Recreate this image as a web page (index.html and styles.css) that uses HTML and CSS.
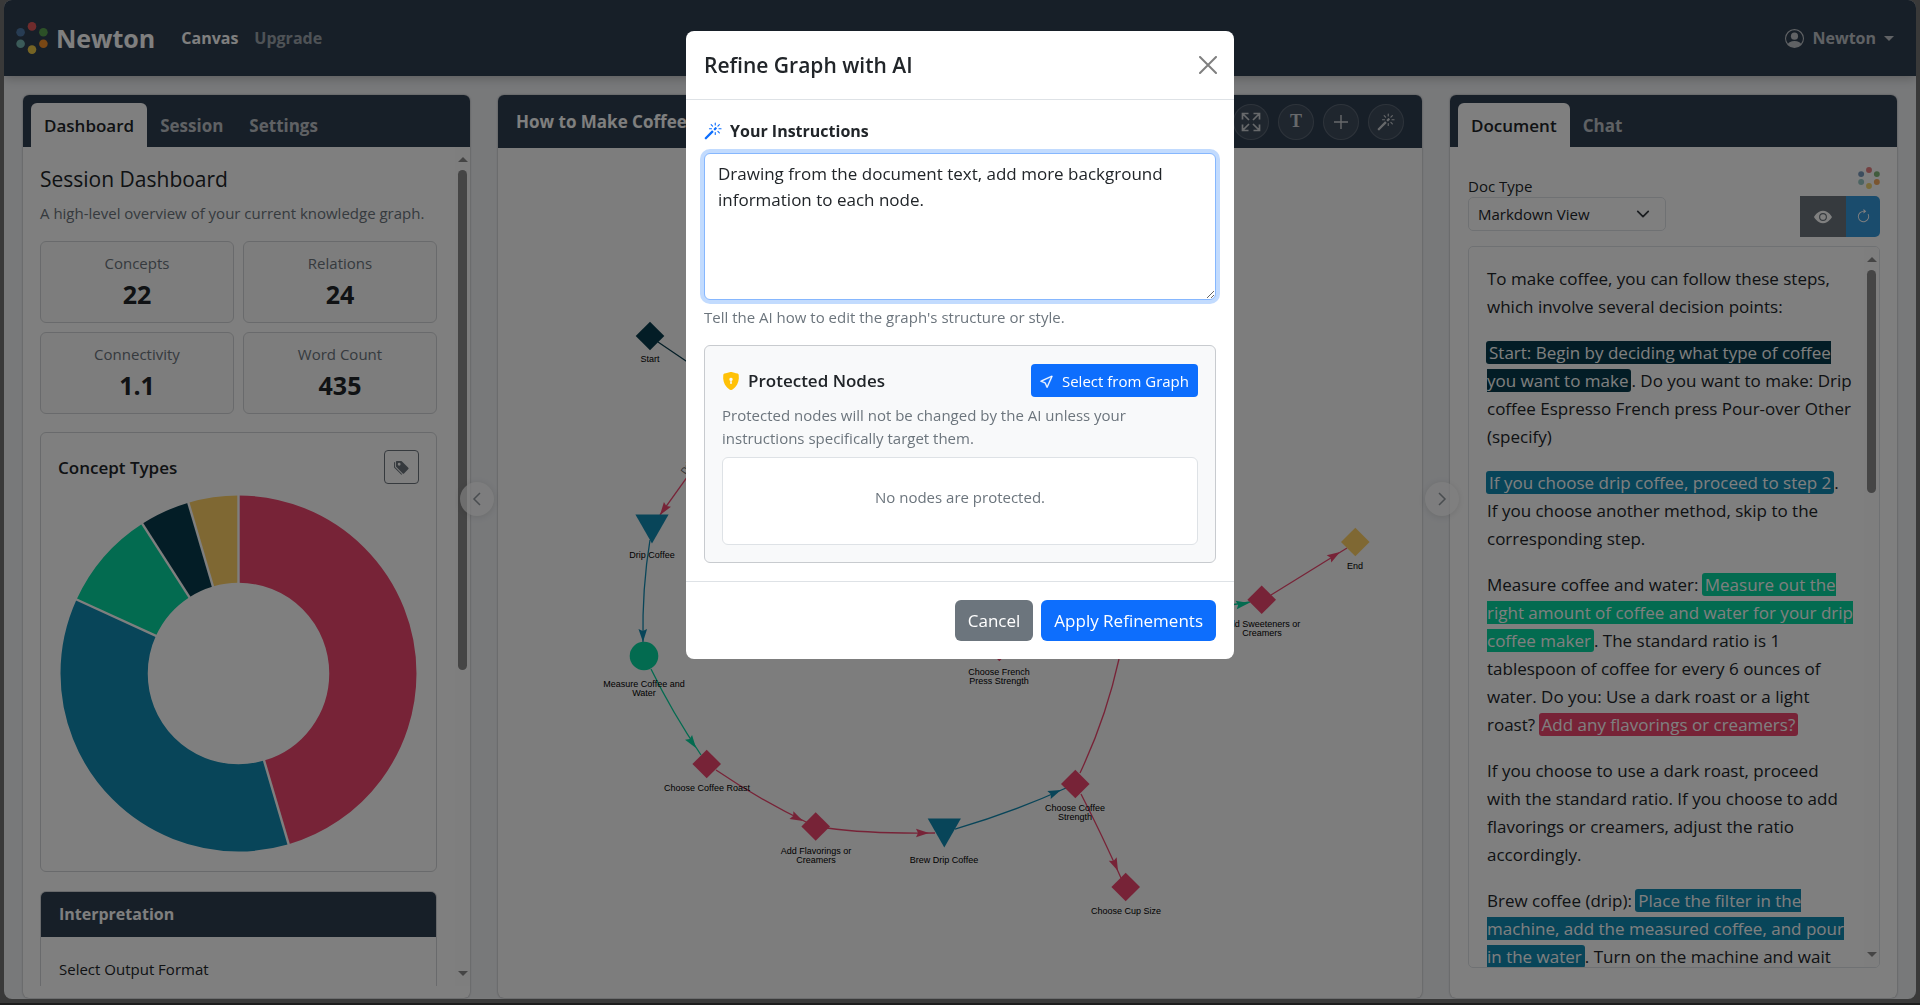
FILE: index.html
```html
<!DOCTYPE html>
<html lang="en">
<head>
  <meta charset="UTF-8">
  <title>Newton</title>
  <link rel="stylesheet" href="styles.css">
</head>
<body>
  <!-- shared icons -->
  <svg class="sprite" aria-hidden="true">
    <symbol id="icon-logo" viewBox="0 0 32 32">
      <circle cx="16" cy="4.4" r="4.3" fill="#e15759"/>
      <circle cx="27.4" cy="10.3" r="4.3" fill="#59a14f"/>
      <circle cx="27.4" cy="21.7" r="4.3" fill="#f28e2b"/>
      <circle cx="16" cy="27.6" r="4.3" fill="#edc948"/>
      <circle cx="4.6" cy="21.7" r="4.3" fill="#76b7b2"/>
      <circle cx="4.6" cy="10.3" r="4.3" fill="#4e79a7"/>
    </symbol>
    <symbol id="icon-magic" viewBox="0 0 16 16">
      <path d="M9.5 2.672a.5.5 0 1 0 1 0V.843a.5.5 0 0 0-1 0v1.829Zm4.5.035A.5.5 0 0 0 13.293 2L12 3.293a.5.5 0 1 0 .707.707L14 2.707ZM7.293 4A.5.5 0 1 0 8 3.293L6.707 2A.5.5 0 0 0 6 2.707L7.293 4Zm-.621 2.5a.5.5 0 1 0 0-1H4.843a.5.5 0 1 0 0 1h1.829Zm8.485 0a.5.5 0 1 0 0-1h-1.829a.5.5 0 0 0 0 1h1.829ZM13.293 10A.5.5 0 1 0 14 9.293L12.707 8a.5.5 0 1 0-.707.707L13.293 10ZM9.5 11.157a.5.5 0 0 0 1 0V9.328a.5.5 0 0 0-1 0v1.829Zm1.854-5.097a.5.5 0 0 0 0-.706l-.708-.708a.5.5 0 0 0-.707 0L8.646 5.94a.5.5 0 0 0 0 .707l.708.708a.5.5 0 0 0 .707 0l1.293-1.293Zm-3 3a.5.5 0 0 0 0-.706l-.708-.708a.5.5 0 0 0-.707 0L.646 13.94a.5.5 0 0 0 0 .707l.707.707a.5.5 0 0 0 .707 0L8.354 9.06Z"/>
    </symbol>
  </svg>

  <div class="app">
    <nav class="navbar">
      <a class="brand" href="#">
        <svg width="32" height="32"><use href="#icon-logo"/></svg>
        <span>Newton</span>
      </a>
      <a class="nav-link active" href="#">Canvas</a>
      <a class="nav-link" href="#">Upgrade</a>
      <button class="user-menu" type="button">
        <svg width="19" height="19" viewBox="0 0 16 16" fill="currentColor">
          <path d="M11 6a3 3 0 1 1-6 0 3 3 0 0 1 6 0z"/>
          <path fill-rule="evenodd" d="M0 8a8 8 0 1 1 16 0A8 8 0 0 1 0 8zm8-7a7 7 0 0 0-5.468 11.37C3.242 11.226 4.805 10 8 10s4.757 1.225 5.468 2.37A7 7 0 0 0 8 1z"/>
        </svg>
        <span>Newton</span>
        <span class="caret"></span>
      </button>
    </nav>

    <main class="workspace">
      <section class="panel side">
        <div class="panel-tabs">
          <button class="tab active" type="button">Dashboard</button>
          <button class="tab" type="button">Session</button>
          <button class="tab" type="button">Settings</button>
        </div>
        <div class="dash-scroll">
          <div class="dash-content">
            <h2 class="dash-title">Session Dashboard</h2>
            <p class="dash-desc">A high-level overview of your current knowledge graph.</p>

            <div class="stats">
              <div class="stat"><span>Concepts</span><strong>22</strong></div>
              <div class="stat"><span>Relations</span><strong>24</strong></div>
              <div class="stat"><span>Connectivity</span><strong>1.1</strong></div>
              <div class="stat"><span>Word Count</span><strong>435</strong></div>
            </div>

            <div class="chart-card">
              <div class="chart-head">
                <h3>Concept Types</h3>
                <button class="tag-btn" type="button" aria-label="Labels">
                  <svg width="15" height="15" viewBox="0 0 16 16" fill="currentColor">
                    <path d="M2 2a1 1 0 0 1 1-1h4.586a1 1 0 0 1 .707.293l7 7a1 1 0 0 1 0 1.414l-4.586 4.586a1 1 0 0 1-1.414 0l-7-7A1 1 0 0 1 2 6.586V2zm3.5 4a1.5 1.5 0 1 0 0-3 1.5 1.5 0 0 0 0 3z"/>
                    <path d="M1.293 7.793A1 1 0 0 1 1 7.086V2a1 1 0 0 0-1 1v4.586a1 1 0 0 0 .293.707l7 7a1 1 0 0 0 1.414 0l.043-.043-7.457-7.457z"/>
                  </svg>
                </button>
              </div>
              <svg class="donut" viewBox="-180 -180 360 360">
                <!-- one dash unit per concept, 22 in total -->
                <g fill="none" stroke-width="87" transform="rotate(-90)">
                  <circle r="134" pathLength="22" stroke="#ef476f" stroke-dasharray="10 12"/>
                  <circle r="134" pathLength="22" stroke="#118ab2" stroke-dasharray="8 14" stroke-dashoffset="-10"/>
                  <circle r="134" pathLength="22" stroke="#06d6a0" stroke-dasharray="2 20" stroke-dashoffset="-18"/>
                  <circle r="134" pathLength="22" stroke="#073b4c" stroke-dasharray="1 21" stroke-dashoffset="-20"/>
                  <circle r="134" pathLength="22" stroke="#ffd166" stroke-dasharray="1 21" stroke-dashoffset="-21"/>
                </g>
                <g stroke="#fff" stroke-width="2.4">
                  <path d="M0-85V-180"/>
                  <path d="M0-85V-180" transform="rotate(163.64)"/>
                  <path d="M0-85V-180" transform="rotate(294.55)"/>
                  <path d="M0-85V-180" transform="rotate(327.27)"/>
                  <path d="M0-85V-180" transform="rotate(343.64)"/>
                </g>
              </svg>
            </div>

            <div class="interp-card">
              <h3>Interpretation</h3>
              <div class="interp-body">
                <label for="output-format">Select Output Format</label>
                <select id="output-format" class="select"><option>Summary</option></select>
              </div>
            </div>
          </div>
          <div class="scrollbar"><i class="arrow-up"></i><div class="track"><div class="thumb thumb-dash"></div></div><i class="arrow-down"></i></div>
        </div>
      </section>

      <div class="gutter">
        <button class="collapse collapse-left" type="button" aria-label="Collapse left panel">
          <svg width="12" height="14" viewBox="0 0 12 14"><path d="M9 1 3 7l6 6"/></svg>
        </button>
      </div>

      <section class="panel center">
        <div class="graph-head">
          <h2>How to Make Coffee</h2>
          <div class="graph-tools">
            <button class="tool" type="button" aria-label="Fullscreen">
              <svg width="20" height="20" viewBox="0 0 20 20" fill="none" stroke="currentColor" stroke-width="1.7"><path d="M1.5 7.500V1.500H7.500M1.500 1.500 8 8M12.500 1.500H18.500V7.500M18.500 1.500 12 8M18.500 12.500V18.500H12.500M18.500 18.500 12 12M7.500 18.500H1.500V12.500M1.500 18.500 8 12"/></svg>
            </button>
            <button class="tool tool-text" type="button">T</button>
            <button class="tool" type="button" aria-label="Add node">
              <svg width="16" height="16" viewBox="0 0 16 16" stroke="currentColor" stroke-width="1.4"><path d="M8 1v14M1 8h14"/></svg>
            </button>
            <button class="tool" type="button" aria-label="Refine">
              <svg width="18" height="18" fill="currentColor"><use href="#icon-magic"/></svg>
            </button>
          </div>
        </div>
        <svg class="graph" viewBox="0 0 924 850">
          <defs>
            <path id="diamond" d="M0-14.3 14.3 0 0 14.3-14.3 0z"/>
            <path id="triangle" d="M-16.6-14.4H16.6L0 14.4z"/>
            <path id="arrow" d="M0 0-13 4.3-11 0-13-4.3z"/>
          </defs>

          <g class="edges">
            <path class="start" d="M160 194 188 213 300 270"/>
            <path class="pink" d="M230 272 162 367"/>
            <path class="blue" d="M152 392Q144 440 145 494"/>
            <path class="green" d="M153 521Q174 564 203 607"/>
            <path class="pink" d="M218 622Q262 652 312 676"/>
            <path class="pink" d="M329 680Q372 686 437 685"/>
            <path class="blue" d="M457 681Q513 665 568 640"/>
            <path class="pink" d="M582 625Q608 570 621 511"/>
            <path class="pink" d="M583 646Q605 689 623 730"/>
            <path class="green" d="M700 462 752 454"/>
            <path class="pink" d="M773 447 849 400"/>
          </g>
          <g>
            <use class="pink" href="#arrow" transform="translate(162 367) rotate(125)"/>
            <use class="blue" href="#arrow" transform="translate(145 494) rotate(89)"/>
            <use class="green" href="#arrow" transform="translate(198 600) rotate(55)"/>
            <use class="pink" href="#arrow" transform="translate(305 673) rotate(27)"/>
            <use class="pink" href="#arrow" transform="translate(431 685)"/>
            <use class="blue" href="#arrow" transform="translate(563 642) rotate(-23)"/>
            <use class="pink" href="#arrow" transform="translate(620 723) rotate(66)"/>
            <use class="green" href="#arrow" transform="translate(751 455) rotate(-9)"/>
            <use class="pink" href="#arrow" transform="translate(842 404) rotate(-32)"/>
          </g>
          <g>
            <use class="start" href="#diamond" x="152" y="188"/>
            <use class="blue" href="#triangle" x="154" y="381"/>
            <circle class="green" cx="146" cy="508" r="14.3"/>
            <use class="pink" href="#diamond" x="208.7" y="616"/>
            <use class="pink" href="#diamond" x="317.7" y="678.5"/>
            <use class="blue" href="#triangle" x="446.3" y="685"/>
            <use class="pink" href="#diamond" x="577.3" y="636"/>
            <use class="pink" href="#diamond" x="627.7" y="739"/>
            <use class="pink" href="#diamond" x="501.3" y="499"/>
            <use class="pink" href="#diamond" x="763.7" y="451.7"/>
            <use class="end" href="#diamond" x="857.3" y="394"/>
          </g>
          <g class="node-labels">
            <text x="152" y="214">Start</text>
            <text x="154" y="410">Drip Coffee</text>
            <text x="146" y="539">Measure Coffee and</text>
            <text x="146" y="548">Water</text>
            <text x="209" y="643">Choose Coffee Roast</text>
            <text x="318" y="706">Add Flavorings or</text>
            <text x="318" y="715">Creamers</text>
            <text x="446" y="715">Brew Drip Coffee</text>
            <text x="577" y="663">Choose Coffee</text>
            <text x="577" y="672">Strength</text>
            <text x="628" y="766">Choose Cup Size</text>
            <text x="501" y="527">Choose French</text>
            <text x="501" y="536">Press Strength</text>
            <text x="764" y="479">Add Sweeteners or</text>
            <text x="764" y="488">Creamers</text>
            <text x="857" y="421">End</text>
            <text class="edge-label" transform="translate(192 320) rotate(-54)">Drip</text>
          </g>
        </svg>
      </section>

      <div class="gutter">
        <button class="collapse collapse-right" type="button" aria-label="Collapse right panel">
          <svg width="12" height="14" viewBox="0 0 12 14"><path d="M3 1l6 6-6 6"/></svg>
        </button>
      </div>

      <section class="panel side">
        <div class="panel-tabs">
          <button class="tab active" type="button">Document</button>
          <button class="tab" type="button">Chat</button>
        </div>
        <div class="doc-body">
          <div class="doc-toolbar">
            <div class="doc-type">
              <label for="doc-type">Doc Type</label>
              <select id="doc-type" class="select"><option>Markdown View</option></select>
            </div>
            <div class="doc-actions">
              <svg class="doc-logo" width="22" height="22"><use href="#icon-logo"/></svg>
              <div class="btn-group">
                <button class="view-btn" type="button" aria-label="Preview">
                  <svg width="18" height="18" viewBox="0 0 16 16" fill="currentColor"><path d="M10.5 8a2.5 2.5 0 1 1-5 0 2.5 2.5 0 0 1 5 0z"/><path d="M0 8s3-5.5 8-5.5S16 8 16 8s-3 5.5-8 5.5S0 8 0 8zm8 3.5a3.5 3.5 0 1 0 0-7 3.5 3.5 0 0 0 0 7z"/></svg>
                </button>
                <button class="reload-btn" type="button" aria-label="Reload">
                  <svg width="15" height="15" viewBox="0 0 16 16" fill="currentColor"><path d="M8 3a5 5 0 1 0 4.546 2.914.5.5 0 0 1 .908-.417A6 6 0 1 1 8 2v1z"/><path d="M8 4.466V.534a.25.25 0 0 1 .41-.192l2.36 1.966c.12.1.12.284 0 .384L8.41 4.658A.25.25 0 0 1 8 4.466z"/></svg>
                </button>
              </div>
            </div>
          </div>
          <div class="doc-box">
            <div class="doc-text">
              <p>To make coffee, you can follow these steps, which involve several decision points:</p>
              <p><mark class="hl hl-start">Start: Begin by deciding what type of coffee you want to make</mark>. Do you want to make: Drip coffee Espresso French press Pour-over Other (specify)</p>
              <p><mark class="hl hl-blue">If you choose drip coffee, proceed to step 2</mark>.<br>If you choose another method, skip to the corresponding step.</p>
              <p>Measure coffee and water: <mark class="hl hl-green">Measure out the right amount of coffee and water for your drip coffee maker</mark>. The standard ratio is 1 tablespoon of coffee for every 6 ounces of water. Do you: Use a dark roast or a light<br>roast? <mark class="hl hl-pink">Add any flavorings or creamers?</mark></p>
              <p>If you choose to use a dark roast, proceed<br>with the standard ratio. If you choose to add flavorings or creamers, adjust the ratio accordingly.</p>
              <p>Brew coffee (drip): <mark class="hl hl-blue">Place the filter in the<br>machine, add the measured coffee, and pour in the water</mark>. Turn on the machine and wait</p>
            </div>
            <div class="scrollbar"><i class="arrow-up"></i><div class="track"><div class="thumb thumb-doc"></div></div><i class="arrow-down"></i></div>
          </div>
        </div>
      </section>
    </main>
  </div>

  <div class="backdrop">
    <div class="modal" role="dialog" aria-labelledby="modal-title">
      <div class="modal-header">
        <h2 id="modal-title">Refine Graph with AI</h2>
        <button class="close-btn" type="button" aria-label="Close">
          <svg width="18" height="18" viewBox="0 0 18 18" stroke="currentColor" stroke-width="2" stroke-linecap="round"><path d="M1 1l16 16M17 1 1 17"/></svg>
        </button>
      </div>
      <div class="modal-body">
        <label class="field-label" for="instructions">
          <svg width="18" height="18" fill="#0d6efd"><use href="#icon-magic"/></svg>
          Your Instructions
        </label>
        <textarea id="instructions" autofocus>Drawing from the document text, add more background information to each node.</textarea>
        <p class="help">Tell the AI how to edit the graph's structure or style.</p>

        <div class="protect-card">
          <div class="protect-head">
            <svg width="18" height="18" viewBox="0 0 16 16" fill="#ffc107"><path fill-rule="evenodd" d="M8 0c-.69 0-1.843.265-2.928.56-1.11.3-2.229.655-2.887.87a1.54 1.54 0 0 0-1.044 1.262c-.596 4.477.787 7.795 2.465 9.99a11.777 11.777 0 0 0 2.517 2.453c.386.273.744.482 1.048.625.28.132.581.24.829.24s.548-.108.829-.24a7.159 7.159 0 0 0 1.048-.625 11.775 11.775 0 0 0 2.517-2.453c1.678-2.195 3.061-5.513 2.465-9.99a1.541 1.541 0 0 0-1.044-1.263 62.467 62.467 0 0 0-2.887-.87C9.843.266 8.69 0 8 0zm0 5a1.5 1.5 0 0 1 .5 2.915l.385 1.99a.5.5 0 0 1-.491.595h-.788a.5.5 0 0 1-.49-.595l.384-1.99A1.5 1.5 0 0 1 8 5z"/></svg>
            <h3>Protected Nodes</h3>
            <button class="btn btn-sm btn-primary" type="button">
              <svg width="14" height="14" viewBox="0 0 16 16" fill="currentColor" stroke="currentColor" stroke-width=".5"><path d="M14.082 2.182a.5.5 0 0 1 .103.557L8.528 15.467a.5.5 0 0 1-.917-.007L5.57 10.694.803 8.652a.5.5 0 0 1-.006-.916l12.728-5.657a.5.5 0 0 1 .556.103zM2.25 8.184l3.897 1.67a.5.5 0 0 1 .262.263l1.67 3.897L12.743 3.52 2.25 8.184z"/></svg>
              Select from Graph
            </button>
          </div>
          <p class="protect-desc">Protected nodes will not be changed by the AI unless your instructions specifically target them.</p>
          <div class="protect-list">No nodes are protected.</div>
        </div>
      </div>
      <div class="modal-footer">
        <button class="btn btn-secondary" type="button">Cancel</button>
        <button class="btn btn-primary" type="button">Apply Refinements</button>
      </div>
    </div>
  </div>

  <script>
    // put the cursor after the last character
    var box = document.getElementById('instructions');
    box.focus();
    box.setSelectionRange(box.value.length, box.value.length);
  </script>
</body>
</html>
```

FILE: styles.css
```css
* {
  box-sizing: border-box;
}
body {
  margin: 0;
  height: 100vh;
  overflow: hidden;
  padding: 0 4px 4px;
  border-bottom: 2px solid #3a3a3a;
  background-color: #727272;
  font-family: 'Segoe UI', 'Open Sans', sans-serif;
  font-size: 17px;
  color: #212529;
}
h2, h3, p {
  margin: 0;
}
button, select, textarea {
  font-family: inherit;
}
button {
  cursor: pointer;
}
.sprite {
  display: none;
}
.app {
  height: 100%;
  display: flex;
  flex-direction: column;
  background-color: #f0f2f5;
  border-radius: 8px;
  overflow: hidden;
}

/* navbar */
.navbar {
  position: relative;
  display: flex;
  flex: none;
  align-items: center;
  height: 76px;
  padding: 0 22px 0 12px;
  background-color: #2f3e50;
  box-shadow: 0 2px 10px rgba(0, 0, 0, 0.25);
}
.brand {
  display: flex;
  align-items: center;
  gap: 8px;
  margin-right: 18px;
  font-size: 25px;
  font-weight: 700;
  color: #fff;
  text-decoration: none;
}
.nav-link {
  padding: 0 8px;
  font-size: 16px;
  font-weight: 700;
  color: rgba(255, 255, 255, 0.55);
  text-decoration: none;
}
.nav-link.active {
  color: #fff;
}
.user-menu {
  display: flex;
  align-items: center;
  gap: 8px;
  margin-left: auto;
  padding: 0;
  border: none;
  background: none;
  font-size: 16px;
  font-weight: 700;
  color: rgba(255, 255, 255, 0.7);
}
.caret {
  border: 5px solid transparent;
  border-top-color: currentColor;
  border-bottom: none;
}

/* panels */
.workspace {
  flex: 1;
  display: flex;
  min-height: 0;
  padding: 19px 19px 1px;
}
.panel {
  display: flex;
  flex-direction: column;
  background-color: #fff;
  border-radius: 6px;
  overflow: hidden;
  box-shadow: 0 0 2px rgba(0, 0, 0, 0.4);
}
.side {
  flex: 0 0 447px;
}
.center {
  flex: 1;
  min-width: 0;
  background-color: #fafafa;
}
.gutter {
  position: relative;
  flex: 0 0 28px;
}
.collapse {
  position: absolute;
  top: 387px;
  z-index: 1;
  display: flex;
  align-items: center;
  justify-content: center;
  width: 34px;
  height: 34px;
  padding: 0;
  border: none;
  border-radius: 50%;
  background-color: #fff;
  box-shadow: 0 1px 6px rgba(0, 0, 0, 0.15);
  opacity: 0.7;
}
.collapse-left {
  left: -10px;
}
.collapse-right {
  left: 3px;
}
.collapse svg {
  fill: none;
  stroke: #6c757d;
  stroke-width: 1.5;
}
.panel-tabs {
  display: flex;
  flex: none;
  height: 52px;
  padding: 8px 8px 0;
  background-color: #2f3e50;
}
.tab {
  padding: 0 13px;
  border: none;
  border-radius: 6px 6px 0 0;
  background: none;
  font-size: 17px;
  font-weight: 700;
  color: rgba(255, 255, 255, 0.7);
}
.tab.active {
  background-color: #fff;
  font-weight: 600;
  color: #212529;
}

/* dashboard */
.dash-scroll {
  flex: 1;
  display: flex;
  min-height: 0;
  margin-bottom: 12px;
  overflow: hidden;
}
.dash-content {
  flex: 1;
  padding: 18px 18px 0 17px;
}
.dash-title {
  font-size: 21px;
  font-weight: 500;
  line-height: 28px;
}
.dash-desc {
  margin: 9px 0 16px;
  font-size: 15px;
  line-height: 23px;
  color: #6c757d;
}
.stats {
  display: grid;
  grid-template-columns: 1fr 1fr;
  gap: 9px;
}
.stat {
  display: flex;
  flex-direction: column;
  padding: 9px;
  border: 1px solid #d3d5d8;
  border-radius: 6px;
  background-color: #fafafa;
  text-align: center;
}
.stat span {
  font-size: 15px;
  line-height: 24px;
  color: #6c757d;
}
.stat strong {
  font-size: 25px;
  line-height: 38px;
}
.chart-card {
  margin: 18px 0 19px;
  padding: 17px;
  border: 1px solid #d3d5d8;
  border-radius: 6px;
}
.chart-head {
  display: flex;
  align-items: center;
  justify-content: space-between;
  margin-bottom: 9px;
}
.chart-head h3 {
  font-size: 17px;
  font-weight: 600;
}
.tag-btn {
  display: flex;
  align-items: center;
  justify-content: center;
  width: 35px;
  height: 34px;
  padding: 0;
  border: 1px solid #6c757d;
  border-radius: 4px;
  background: none;
  color: #6c757d;
}
.donut {
  display: block;
  width: 100%;
}
.interp-card {
  border: 1px solid #d3d5d8;
  border-radius: 6px;
  overflow: hidden;
}
.interp-card h3 {
  padding: 0 18px;
  background-color: #2f3e50;
  font-size: 16px;
  line-height: 45px;
  color: #fff;
}
.interp-body {
  display: flex;
  flex-direction: column;
  gap: 5px;
  padding: 20px 18px;
}
.interp-body label {
  font-size: 15px;
  line-height: 24px;
}

/* scrollbars */
.scrollbar {
  display: flex;
  flex: 0 0 15px;
  flex-direction: column;
  align-items: center;
  padding: 10px 0;
  background-color: #fcfcfc;
}
.track {
  flex: 1;
  width: 9px;
  margin: 8px 0 7px;
}
.thumb {
  border-radius: 5px;
  background-color: #8b8b8b;
}
.thumb-dash {
  height: 63%;
}
.thumb-doc {
  height: 33%;
}
.arrow-up, .arrow-down {
  border: 5px solid transparent;
}
.arrow-up {
  border-top: none;
  border-bottom-color: #8b8b8b;
}
.arrow-down {
  border-bottom: none;
  border-top-color: #8b8b8b;
}

/* graph */
.graph-head {
  display: flex;
  flex: none;
  align-items: center;
  justify-content: space-between;
  height: 53px;
  padding: 0 18px;
  background-color: #2f3e50;
  color: #fff;
}
.graph-head h2 {
  font-size: 17px;
  font-weight: 700;
}
.graph-tools {
  display: flex;
  gap: 9px;
}
.tool {
  display: flex;
  align-items: center;
  justify-content: center;
  width: 36px;
  height: 36px;
  padding: 0;
  border: 1px solid rgba(255, 255, 255, 0.15);
  border-radius: 50%;
  background-color: rgba(255, 255, 255, 0.08);
  color: rgba(255, 255, 255, 0.75);
}
.tool-text {
  font-family: 'Liberation Serif', serif;
  font-size: 18px;
  font-weight: 700;
}
.graph {
  flex: 1;
  width: 100%;
  min-height: 0;
}
.start {
  fill: #073b4c;
  stroke: #073b4c;
}
.blue {
  fill: #118ab2;
  stroke: #118ab2;
}
.green {
  fill: #06d6a0;
  stroke: #06d6a0;
}
.pink {
  fill: #ef476f;
  stroke: #ef476f;
}
.end {
  fill: #ffd166;
}
.graph use, .graph circle {
  stroke: none;
}
.edges path {
  fill: none;
  stroke-width: 1.3;
}
.node-labels {
  font-family: Arial, 'Liberation Sans', sans-serif;
  font-size: 9px;
  text-anchor: middle;
}
.edge-label {
  fill: #666;
}

/* document */
.doc-body {
  flex: 1;
  display: flex;
  flex-direction: column;
  min-height: 0;
  padding: 18px 17px 30px 18px;
}
.doc-toolbar {
  display: flex;
  justify-content: space-between;
  margin-bottom: 9px;
}
.doc-type {
  display: flex;
  flex-direction: column;
  width: 198px;
  padding-top: 10px;
}
.doc-type label {
  font-size: 15px;
  line-height: 22px;
}
.select {
  height: 34px;
  padding: 0 9px;
  appearance: none;
  border: 1px solid #dee2e6;
  border-radius: 5px;
  background: url("data:image/svg+xml,%3csvg xmlns='http://www.w3.org/2000/svg' viewBox='0 0 16 16'%3e%3cpath fill='none' stroke='%23343a40' stroke-linecap='round' stroke-linejoin='round' stroke-width='2' d='m2 5 6 6 6-6'/%3e%3c/svg%3e") no-repeat right 15px center / 14px #fff;
  font-size: 15px;
  color: #212529;
}
.doc-actions {
  display: flex;
  flex-direction: column;
  align-items: flex-end;
  gap: 7px;
  padding-top: 2px;
}
.doc-logo {
  opacity: 0.75;
}
.btn-group {
  display: flex;
}
.view-btn, .reload-btn {
  display: flex;
  align-items: center;
  justify-content: center;
  height: 41px;
  padding: 0;
  border: none;
  color: #fff;
}
.view-btn {
  width: 46px;
  background-color: #6c757d;
}
.reload-btn {
  width: 34px;
  border-radius: 0 5px 5px 0;
  background-color: #3498db;
}
.doc-box {
  flex: 1;
  display: flex;
  min-height: 0;
  overflow: hidden;
  border: 1px solid #dee2e6;
  border-radius: 5px;
}
.doc-text {
  flex: 1;
  padding: 18px 5px 0 18px;
  line-height: 28px;
}
.doc-text p {
  margin-bottom: 18px;
}
.hl {
  padding: 0 3px;
  margin-left: -1px;
  border-radius: 3px;
  color: #fff;
}
.hl-start {
  background-color: #073b4c;
}
.hl-blue {
  background-color: #118ab2;
}
.hl-green {
  background-color: #06d6a0;
}
.hl-pink {
  background-color: #ef476f;
}

/* modal */
.backdrop {
  position: fixed;
  inset: 0;
  z-index: 10;
  padding-top: 31px;
  background-color: rgba(0, 0, 0, 0.5);
}
.modal {
  width: 548px;
  margin: 0 auto;
  background-color: #fff;
  border-radius: 8px;
}
.modal-header {
  display: flex;
  align-items: center;
  justify-content: space-between;
  height: 69px;
  padding: 0 17px 0 18px;
  border-bottom: 1px solid #dee2e6;
}
.modal-header h2 {
  font-size: 21px;
  font-weight: 600;
}
.close-btn {
  display: flex;
  padding: 0;
  border: none;
  background: none;
  color: #7f7f7f;
}
.modal-body {
  padding: 18px;
}
.field-label {
  display: flex;
  align-items: center;
  gap: 8px;
  margin-bottom: 9px;
  font-size: 16px;
  font-weight: 700;
  line-height: 26px;
}
textarea {
  display: block;
  width: 100%;
  height: 147px;
  padding: 7px 13px;
  border: 1px solid #86b7fe;
  border-radius: 6px;
  outline: none;
  box-shadow: 0 0 0 4px rgba(13, 110, 253, 0.25);
  font-size: 17px;
  line-height: 26px;
  color: #212529;
}
.help {
  margin: 5px 0 16px;
  font-size: 15px;
  line-height: 24px;
  color: #6c757d;
}
.protect-card {
  padding: 18px 17px 17px;
  border: 1px solid #c8cbcf;
  border-radius: 6px;
  background-color: #f8f9fa;
}
.protect-head {
  display: flex;
  align-items: center;
  gap: 8px;
}
.protect-head h3 {
  font-size: 17px;
  font-weight: 600;
}
.btn {
  height: 41px;
  padding: 0 13px;
  border: none;
  border-radius: 6px;
  font-size: 17px;
  color: #fff;
}
.btn-sm {
  display: flex;
  align-items: center;
  gap: 8px;
  height: 33px;
  margin-left: auto;
  padding: 0 9px;
  border-radius: 4px;
  font-size: 15px;
}
.btn-primary {
  background-color: #0d6efd;
}
.btn-secondary {
  background-color: #6c757d;
}
.protect-desc {
  margin: 7px 0;
  font-size: 15px;
  line-height: 23px;
  color: #6c757d;
}
.protect-list {
  height: 88px;
  padding-top: 27px;
  border: 1px solid #dee2e6;
  border-radius: 6px;
  background-color: #fff;
  font-size: 15px;
  line-height: 24px;
  text-align: center;
  color: #6c757d;
}
.modal-footer {
  display: flex;
  justify-content: flex-end;
  gap: 8px;
  padding: 18px;
  border-top: 1px solid #dee2e6;
}
```
